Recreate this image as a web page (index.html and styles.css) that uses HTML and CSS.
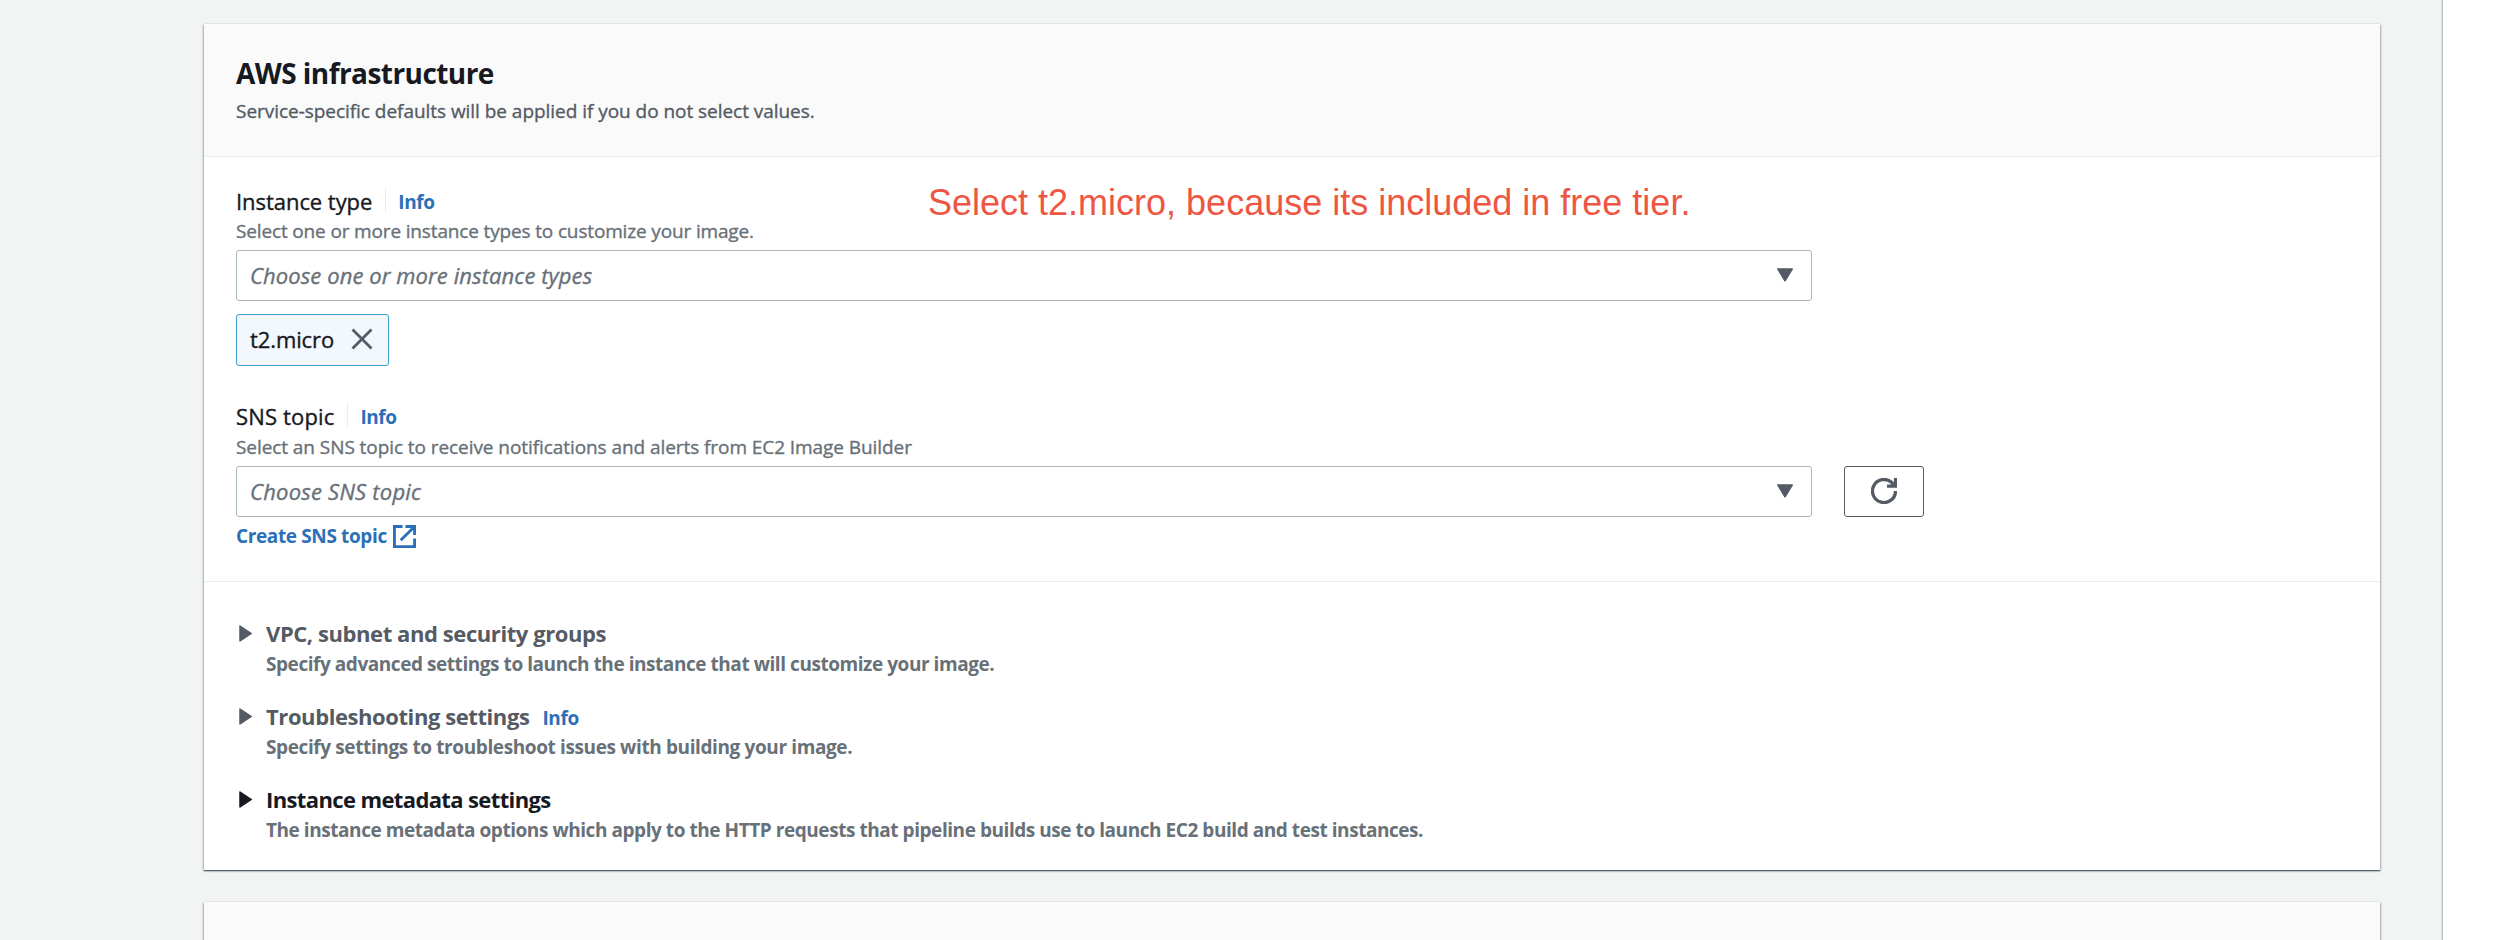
FILE: index.html
```html
<!DOCTYPE html>
<html lang="en">
<head>
<meta charset="utf-8">
<title>AWS infrastructure</title>
<link rel="stylesheet" href="styles.css">
</head>
<body>
<main class="page">
  <section class="card">
    <header class="card-header">
      <h2 class="title">AWS infrastructure</h2>
      <p class="small dark">Service-specific defaults will be applied if you do not select values.</p>
    </header>
    <div class="card-body">
      <p class="annotation">Select t2.micro, because its included in free tier.</p>
      <div class="field">
        <div class="label-row"><span class="label">Instance type</span><a class="info divided">Info</a></div>
        <p class="small hint">Select one or more instance types to customize your image.</p>
        <div class="select"><span>Choose one or more instance types</span>
          <svg class="caret" viewBox="0 0 16 14"><path d="M.8 1h14.400L8 12.8z"/></svg></div>
        <div class="token"><span>t2.micro</span>
          <svg class="close" viewBox="0 0 22 22"><path d="M1.5 1.5l19 19M20.5 1.5l-19 19"/></svg></div>
      </div>
      <div class="field sns">
        <div class="label-row"><span class="label">SNS topic</span><a class="info divided">Info</a></div>
        <p class="small hint">Select an SNS topic to receive notifications and alerts from EC2 Image Builder</p>
        <div class="select-row">
          <div class="select"><span>Choose SNS topic</span>
            <svg class="caret" viewBox="0 0 16 14"><path d="M.8 1h14.400L8 12.8z"/></svg></div>
          <button class="refresh" aria-label="Refresh"><svg viewBox="0 0 26 26"><path d="M24.500 13A11.500 11.500 0 1 1 20.500 4.300L23 7M24.500 0V8.200H16"/></svg></button>
        </div>
        <a class="create"><span>Create SNS topic</span>
          <svg viewBox="0 0 24 24"><path d="M10 1.500H1.500V22.500H22.500V14M13 1.500H22.500V10.500M22 2L8 16"/></svg></a>
      </div>
    </div>
    <div class="expanders">
      <div class="expander"><svg class="arrow" viewBox="0 0 13 17"><path d="M1 1v15L12.300 8.500z"/></svg>
        <div><h3 class="heading"><span>VPC, subnet and security groups</span></h3>
        <p class="small sub">Specify advanced settings to launch the instance that will customize your image.</p></div></div>
      <div class="expander"><svg class="arrow" viewBox="0 0 13 17"><path d="M1 1v15L12.300 8.500z"/></svg>
        <div><h3 class="heading"><span>Troubleshooting settings</span><a class="info">Info</a></h3>
        <p class="small sub issues">Specify settings to troubleshoot issues with building your image.</p></div></div>
      <div class="expander active"><svg class="arrow" viewBox="0 0 13 17"><path d="M1 1v15L12.300 8.500z"/></svg>
        <div><h3 class="heading"><span>Instance metadata settings</span></h3>
        <p class="small sub">The instance metadata options which apply to the HTTP requests that pipeline builds use to launch EC2 build and test instances.</p></div></div>
    </div>
  </section>
  <section class="card next"></section>
</main>
</body>
</html>
```

FILE: styles.css
```css
* { box-sizing: border-box; }
body { margin: 0; background: #fff; font-family: "Open Sans", "Noto Sans", sans-serif; color: #16191f; }
h2, h3, p { margin: 0; }
svg { display: block; fill: none; }

.page { width: 2443px; height: 940px; overflow: hidden; padding: 24px 62px 0 204px; background: #f2f3f3; border-right: 1px solid #bcc1c2; box-shadow: inset -1px 0 #e3e6e6; display: flex; flex-direction: column; gap: 32px; }
.card { background: #fff; box-shadow: 0 1px 1px 0 rgba(0, 28, 36, .5), 1px 1px 2px 0 rgba(0, 28, 36, .25), -1px 1px 2px 0 rgba(0, 28, 36, .25), 0 -1px 0 #eaeded; flex: none; }
.card-header { height: 133px; padding: 29px 32px 0; background: #fafafa; border-bottom: 1px solid #eaeded; }
.title { font-size: 28px; line-height: 40px; font-weight: 700; margin-bottom: 3px; letter-spacing: -.56px; }
.small { font-size: 19px; line-height: 30px; white-space: nowrap; }
.dark { color: #545b64; letter-spacing: -.04px; }
.hint { color: #687078; letter-spacing: -.15px; }
.small, .label, .select span, .token span { -webkit-text-stroke: .35px currentColor; }

.card-body { position: relative; height: 425px; padding: 29px 32px 0; border-bottom: 1px solid #eaeded; }
.annotation { position: absolute; left: 724px; top: 24px; font: 36px/44px "Liberation Sans", Arial, sans-serif; color: #ee5644; white-space: nowrap; }
.label-row { display: flex; height: 30px; line-height: 30px; font-size: 22px; letter-spacing: -.05px; }
.info { font-size: 19px; font-weight: 700; color: #2b6fb8; letter-spacing: -.4px; }
.divided { margin: 1px 0 0 13px; padding-left: 12px; height: 26px; border-left: 1px solid #eaeded; }
.select { display: flex; align-items: center; justify-content: space-between; width: 1576px; height: 51px; margin-top: 4px; padding: 0 18px 2px 13px; border: 1px solid #aab7b8; border-radius: 3px; font-size: 22px; font-style: italic; letter-spacing: .09px; color: #687078; }
.caret { width: 16px; height: 14px; fill: #545b64; stroke: #545b64; stroke-width: 1.5px; stroke-linejoin: round; }
.token { display: flex; align-items: center; justify-content: space-between; width: 153px; height: 52px; margin-top: 13px; padding: 0 15px 2px 13px; border: 1px solid #3f9fc9; border-radius: 3px; background: #f2f8fd; font-size: 22px; letter-spacing: -.1px; }
.close { width: 22px; height: 22px; stroke: #545b64; stroke-width: 2.8px; }
.sns { margin-top: 35px; }
.sns .label { letter-spacing: .15px; }
.sns .hint { margin-top: 1px; letter-spacing: -.07px; }
.select-row { display: flex; gap: 32px; margin-top: 4px; }
.select-row .select { margin: 0; letter-spacing: .22px; }
.refresh { display: flex; align-items: center; justify-content: center; width: 80px; height: 51px; padding: 0 0 2px; background: #fff; border: 1px solid #545b64; border-radius: 3px; }
.refresh svg { width: 26px; height: 26px; stroke: #545b64; stroke-width: 3.3px; }
.create { display: flex; align-items: center; gap: 6px; height: 30px; margin-top: 4px; font-size: 19px; font-weight: 700; letter-spacing: -.37px; color: #2b6fb8; }
.create svg { width: 23px; height: 23px; stroke: currentColor; stroke-width: 3px; }

.expanders { display: flex; flex-direction: column; gap: 23px; height: 288px; padding: 36px 35px 0; }
.expander { display: flex; gap: 14px; height: 60px; color: #545b64; }
.active { color: #16191f; }
.arrow { width: 13px; height: 17px; margin-top: 7px; fill: currentColor; stroke: currentColor; stroke-width: 1.5px; stroke-linejoin: round; }
.heading { display: flex; align-items: baseline; gap: 13px; height: 31px; font-size: 22px; line-height: 30px; font-weight: 700; letter-spacing: -.42px; }
.active .heading { letter-spacing: -.62px; }
.sub { font-weight: 700; color: #687078; letter-spacing: -.445px; -webkit-text-stroke: 0; }
.issues { letter-spacing: -.385px; }
.next { height: 60px; background: #fafafa; }
```
